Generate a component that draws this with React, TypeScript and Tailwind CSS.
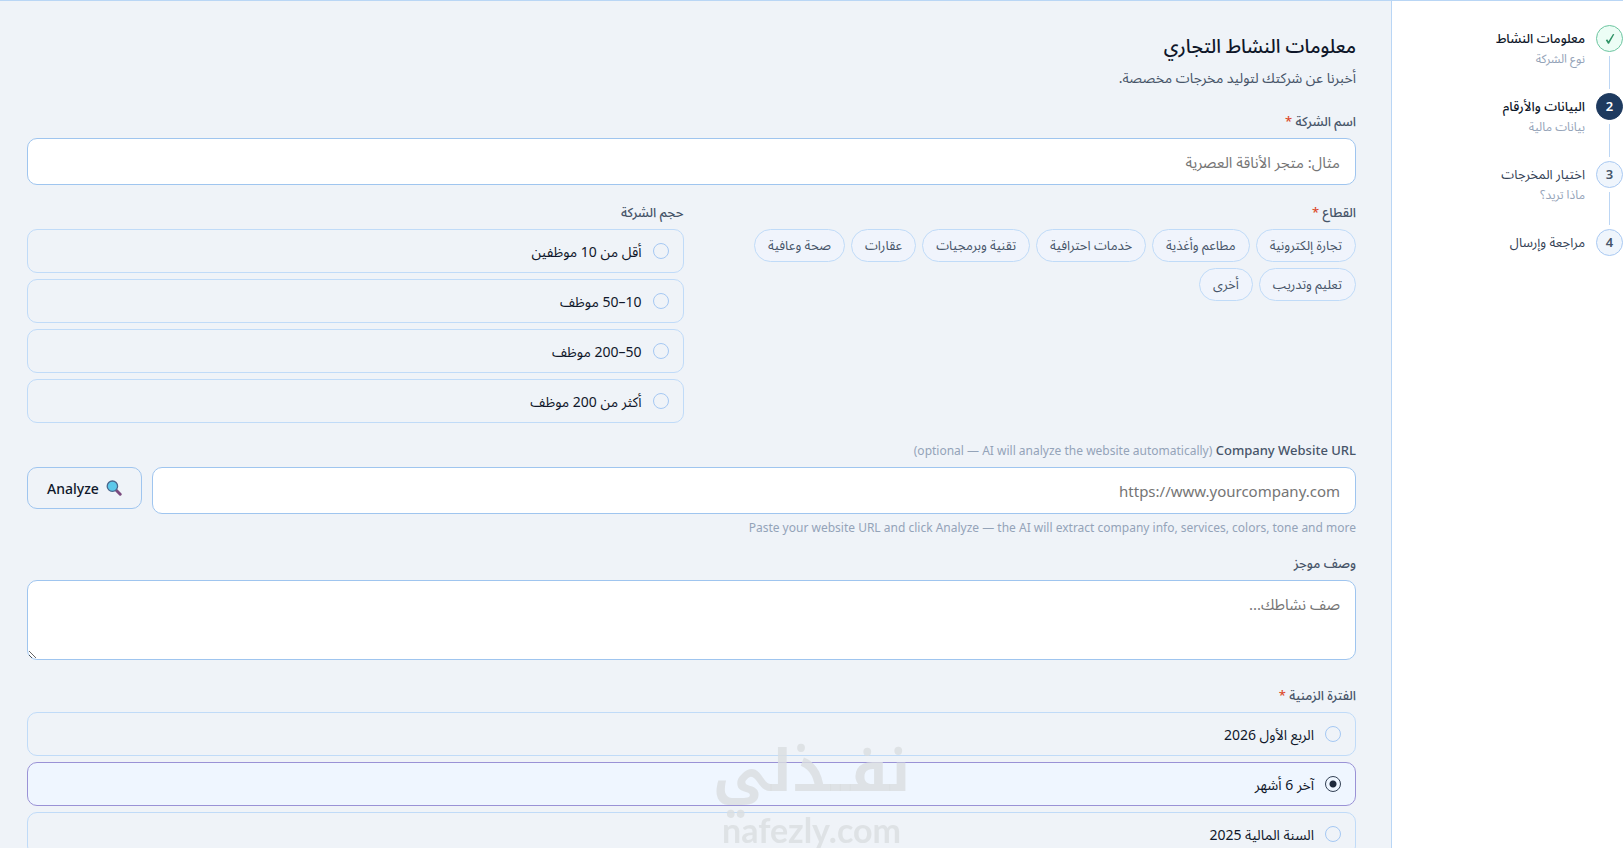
import React, { useState } from "react";

const steps = [
  { title: "معلومات النشاط", note: "نوع الشركة", state: "done" },
  { title: "البيانات والأرقام", note: "بيانات مالية", state: "current" },
  { title: "اختيار المخرجات", note: "ماذا تريد؟", state: "todo" },
  { title: "مراجعة وإرسال", note: "", state: "todo" },
];

const sectors = [
  "تجارة إلكترونية",
  "مطاعم وأغذية",
  "خدمات احترافية",
  "تقنية وبرمجيات",
  "عقارات",
  "صحة وعافية",
  "تعليم وتدريب",
  "أخرى",
];

const sizes = ["أقل من 10 موظفين", "10–50 موظف", "50–200 موظف", "أكثر من 200 موظف"];
const periods = ["الربع الأول 2026", "آخر 6 أشهر", "السنة المالية 2025"];

const circleStyles: Record<string, string> = {
  done: "border-[#6cc5a0] bg-[#ecfdf5] text-[#2f9366]",
  current: "border-[#1e3a5f] bg-[#1e3a5f] text-white",
  todo: "border-[#a9c9f2] bg-[#eff5fc] text-[#475569]",
};

function Sidebar() {
  return (
    <aside className="w-[232px] shrink-0 border-l border-[#b9d6f5] bg-white pt-6" dir="rtl">
      <ol>
        {steps.map((s, i) => (
          <li key={s.title} className="flex gap-[11px]">
            <div className="flex flex-col items-center">
              <span
                className={`flex size-[27px] items-center justify-center rounded-full border text-[13px] font-semibold ${circleStyles[s.state]}`}
              >
                {s.state === "done" ? (
                  <svg viewBox="0 0 12 14" className="h-3 w-[10px]" fill="none" aria-label="مكتمل">
                    <path d="M1 8.4 2.6 7.4 4.2 9.8 9.6 1 11.2 1.4 4.8 12.8 3.6 12.8Z" fill="currentColor" />
                  </svg>
                ) : (
                  i + 1
                )}
              </span>
              {i < steps.length - 1 && <span className="my-1 h-[33px] w-px bg-[#bcd6f4]" />}
            </div>
            <div>
              <p
                className={`text-[13px] leading-[26px] ${s.state === "todo" ? "text-[#334155]" : "font-medium text-[#0f172a]"}`}
              >
                {s.title}
              </p>
              {s.note && <p className="text-[12px] leading-4 text-[#94a3b8]">{s.note}</p>}
            </div>
          </li>
        ))}
      </ol>
    </aside>
  );
}

function Star() {
  return <span className="text-[#dc4a2c]">*</span>;
}

function OptionList({ name, options, initial = "" }: { name: string; options: string[]; initial?: string }) {
  const [value, setValue] = useState(initial);
  return (
    <div className="flex flex-col gap-[6px]">
      {options.map((o) => (
        <label
          key={o}
          className="flex h-11 shrink-0 cursor-pointer items-center gap-[11px] rounded-[10px] border border-[#c0dbf8] px-[14px] text-[14px] text-[#0f172a] has-checked:border-[#9a92d6] has-checked:bg-[#eff6ff]"
        >
          <input
            type="radio"
            name={name}
            checked={value === o}
            onChange={() => setValue(o)}
            className="size-4 shrink-0 appearance-none rounded-full border border-[#a5c8f3] checked:border-[#334155] checked:bg-[radial-gradient(circle,#1e293b_0,#1e293b_3px,transparent_4px)]"
          />
          <span>{o}</span>
        </label>
      ))}
    </div>
  );
}

const labelClass = "block text-[13px] leading-[18px] font-medium text-[#475569]";
const fieldClass =
  "block w-full rounded-[10px] border border-[#9fc5ef] bg-white px-[15px] text-[15px] text-[#0f172a] outline-none placeholder:text-[#757575]";

export default function App() {
  const [sector, setSector] = useState("");
  return (
    <div
      dir="rtl"
      className="flex h-screen overflow-hidden border-t border-[#b9d6f5] bg-[#eff3f8] font-['Noto_Sans','Noto_Sans_Arabic','DejaVu_Sans',sans-serif]"
    >
      <Sidebar />
      <main className="min-w-0 flex-1 overflow-y-auto pt-[29px] pr-[35px] pb-8 pl-[27px] [scrollbar-width:none]">
        <h1 className="text-[19px] leading-8 font-medium text-[#0f172a]">معلومات النشاط التجاري</h1>
        <p className="text-[14px] leading-8 text-[#475569]">أخبرنا عن شركتك لتوليد مخرجات مخصصة.</p>

        <form onSubmit={(e) => e.preventDefault()} className="mt-[18px]">
          <label htmlFor="company" className={labelClass}>
            اسم الشركة <Star />
          </label>
          <input id="company" type="text" placeholder="مثال: متجر الأناقة العصرية" className={`${fieldClass} mt-2 h-[47px]`} />

          <div className="mt-[18px] grid grid-cols-2 gap-4">
            <fieldset>
              <legend className={labelClass}>
                القطاع <Star />
              </legend>
              <div className="mt-2 flex flex-wrap gap-[6px]">
                {sectors.map((s) => (
                  <button
                    key={s}
                    type="button"
                    aria-pressed={sector === s}
                    onClick={() => setSector(s)}
                    className="h-[33px] rounded-full border border-[#c0dbf8] bg-[#f0f4fc] px-[13px] text-[13px] text-[#475569] aria-pressed:border-[#9a92d6] aria-pressed:bg-[#eff6ff]"
                  >
                    {s}
                  </button>
                ))}
              </div>
            </fieldset>
            <fieldset>
              <legend className={`${labelClass} mb-2`}>حجم الشركة</legend>
              <OptionList name="size" options={sizes} />
            </fieldset>
          </div>

          <label htmlFor="url" className={`${labelClass} mt-[18px]`}>
            <bdi>Company Website URL</bdi>{" "}
            <bdi className="text-[12px] font-normal text-[#94a3b8]">
              (optional — AI will analyze the website automatically)
            </bdi>
          </label>
          <div className="mt-[7px] flex items-start gap-[10px]">
            <input
              id="url"
              type="text"
              placeholder="https://www.yourcompany.com"
              className={`${fieldClass} h-[47px] min-w-0 flex-1`}
            />
            <button
              type="button"
              className="flex h-[42px] shrink-0 items-center gap-[7px] rounded-[10px] border border-[#9fc5ef] px-[19px] text-[14px] font-medium text-[#0f172a]"
            >
              <svg viewBox="0 0 16 16" className="size-4" aria-hidden="true">
                <path d="M10 10 14.2 14.2" stroke="#7b4a7e" strokeWidth="3" strokeLinecap="round" />
                <circle cx="6.4" cy="6.2" r="5.2" fill="#5cc8ea" stroke="#49668c" strokeWidth="1.3" />
              </svg>
              Analyze
            </button>
          </div>
          <p className="mt-[6px] text-[12px] leading-4 text-[#94a3b8]">
            Paste your website URL and click Analyze — the AI will extract company info, services, colors, tone and more
          </p>

          <label htmlFor="about" className={`${labelClass} mt-[18px]`}>
            وصف موجز
          </label>
          <textarea id="about" placeholder="صف نشاطك..." className={`${fieldClass} mt-2 h-20 resize-y py-3`} />

          <fieldset className="mt-[26px]">
            <legend className={`${labelClass} mb-2`}>
              الفترة الزمنية <Star />
            </legend>
            <OptionList name="period" options={periods} initial="آخر 6 أشهر" />
          </fieldset>
        </form>
      </main>

      <div className="pointer-events-none fixed inset-x-0 bottom-0 flex flex-col items-center text-[#d9dde0]/80">
        <span className="font-['Noto_Kufi_Arabic','DejaVu_Sans',sans-serif] text-[58px] leading-[80px] font-bold">نفــذلي</span>
        <span dir="ltr" className="font-['Lato',sans-serif] text-[34px] leading-9 font-bold">
          nafezly.com
        </span>
      </div>
    </div>
  );
}
